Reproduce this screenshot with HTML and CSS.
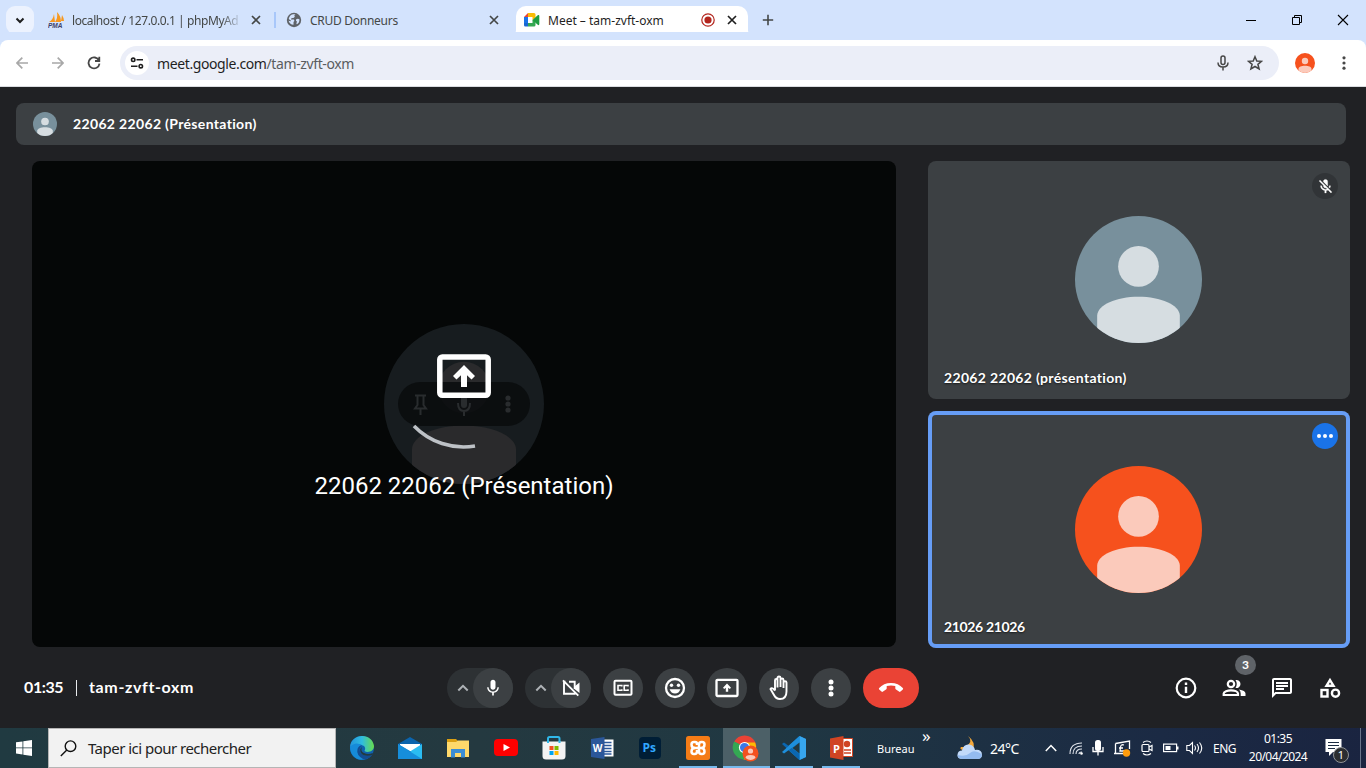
FILE: index.html
```html
<!DOCTYPE html>
<html lang="fr">
<head>
<meta charset="utf-8">
<title>Meet – tam-zvft-oxm</title>
<link rel="stylesheet" href="styles.css">
</head>
<body>
<svg class="defs" width="0" height="0">
  <clipPath id="round"><circle cx="63" cy="63" r="63"/></clipPath>
  <symbol id="avatar" viewBox="0 0 126 126">
    <g clip-path="url(#round)">
      <rect class="av-bg" width="126" height="126"/>
      <circle class="av-fg" cx="63" cy="50" r="20.2"/>
      <path class="av-fg" d="M22 127V99C22 88 41 80 63 80S104 88 104 99V127Z"/>
    </g>
  </symbol>
  <symbol id="x" viewBox="0 0 10 10"><path d="M1 1l8 8M9 1L1 9" fill="none" stroke="currentColor" stroke-width="1.7"/></symbol>
  <symbol id="mic" viewBox="0 0 24 24"><path fill="currentColor" d="M12 14c1.66 0 2.99-1.34 2.99-3L15 5c0-1.66-1.34-3-3-3S9 3.34 9 5v6c0 1.66 1.34 3 3 3zm5.3-3c0 3-2.54 5.1-5.3 5.1S6.7 14 6.7 11H5c0 3.41 2.72 6.23 6 6.72V21h2v-3.28c3.28-.48 6-3.3 6-6.72h-1.7z"/></symbol>
  <symbol id="up" viewBox="0 0 12 8"><path d="M1.3 6.5L6 1.8l4.700 4.700" fill="none" stroke="currentColor" stroke-width="2"/></symbol>
</svg>

<header class="tabs">
  <button class="tab-menu"><svg width="10" height="7" viewBox="0 0 10 7"><path d="M1.500 1.500L5 5l3.500-3.500" fill="none" stroke="#1f1f1f" stroke-width="2"/></svg></button>
  <div class="tab tab-pma">
    <svg class="fav" width="17" height="16" viewBox="0 0 17 16"><path d="M1 10Q5 8 6 2L7 10ZM7 10Q10 6 9 0Q13 4 13 10ZM13 9L14 3Q16 6 16 9Z" fill="#f7981f"/><text x="0" y="15.500" class="pma">PMA</text></svg>
    <span class="tab-title fade">localhost / 127.0.0.1 | phpMyAd</span>
    <svg class="close" width="10" height="10"><use href="#x"/></svg>
  </div>
  <i class="tab-sep"></i>
  <div class="tab tab-crud">
    <svg class="fav" width="16" height="16" viewBox="0 0 16 16"><circle cx="8" cy="8" r="7.200" fill="#5f6368"/><path d="M9.500 2.300Q7.500 3 8.800 4.500Q8 6.300 6.500 6Q4.500 6 5 7.500H8Q9 9 7.500 10V12.800Q3.500 12.500 2.500 8.500Q4.500 10 5 8.800L2.700 7Q3.500 3 7 2.300ZM10 7.500Q12 6 13.500 7.500Q13.500 11 10.800 12.300Q10 11.500 10.700 10.500Q11.500 9.500 10 8.800Z" fill="#d3e3fd"/></svg>
    <span class="tab-title">CRUD Donneurs</span>
    <svg class="close" width="10" height="10"><use href="#x"/></svg>
  </div>
  <div class="tab tab-active">
    <svg class="fav" width="16" height="14" viewBox="0 0 16 14"><path d="M0 4L4 0V4Z" fill="#ea4335"/><path d="M4 0H10Q11.500 0 11.500 1.500V5L8.500 7V4H4Z" fill="#fbbc04"/><path d="M0 4H4V10H0Z" fill="#1a73e8"/><path d="M0 10H4V13.500H1.300Q0 13.500 0 12Z" fill="#1967d2"/><path d="M4 10H8.500V7H11.500V12Q11.500 13.500 10 13.500H4Z" fill="#34a853"/><path d="M8.500 7L14 2Q15.300 1.500 15.300 3V11Q15.300 12.500 14 12Z" fill="#1e9e42"/></svg>
    <span class="tab-title">Meet – tam-zvft-oxm</span>
    <svg class="rec" width="14" height="14" viewBox="0 0 14 14"><circle cx="7" cy="7" r="6.200" fill="none" stroke="#b3261e" stroke-width="1.200"/><circle cx="7" cy="7" r="3.600" fill="#b3261e"/></svg>
    <svg class="close" width="10" height="10"><use href="#x"/></svg>
  </div>
  <svg class="plus" width="12" height="12" viewBox="0 0 12 12"><path d="M6 .8V11.200M.8 6H11.200" stroke="#444746" stroke-width="1.600"/></svg>
  <div class="win">
    <svg width="12" height="12" viewBox="0 0 12 12"><path d="M1 6.500H11" stroke="#000"/></svg>
    <svg width="12" height="12" viewBox="0 0 12 12"><path d="M1.500 3.500H8.500V10.500H1.500ZM3.500 3.500V1.500H10.500V8.500H8.500" fill="none" stroke="#000"/></svg>
    <svg width="12" height="12" viewBox="0 0 12 12"><path d="M1 1L11 11M11 1L1 11" stroke="#000" stroke-width="1.100"/></svg>
  </div>
</header>

<nav class="toolbar">
  <svg class="nav-i dim" width="12" height="12" viewBox="0 0 12 12"><path d="M12 6H1M6.300 .7L1 6L6.300 11.300"/></svg>
  <svg class="nav-i dim" width="12" height="12" viewBox="0 0 12 12"><path d="M0 6H11M5.700 .7L11 6L5.700 11.300"/></svg>
  <svg class="nav-i" width="14" height="14" viewBox="0 0 14 14"><path d="M12 4.500A5.500 5.500 0 1 0 12.500 7.700M12.300 .8V5H8"/></svg>
  <div class="omnibox">
    <span class="site"><svg width="14" height="12" viewBox="0 0 14 12"><g fill="none" stroke="#1f1f1f" stroke-width="1.600"><circle cx="3.200" cy="2.800" r="1.700"/><circle cx="10.800" cy="9.200" r="1.700"/><path d="M6.500 2.800H13M1 9.200H7.500"/></g></svg></span>
    <span class="url">meet.google.com<span>/tam-zvft-oxm</span></span>
    <svg class="o-mic" width="12" height="16" viewBox="0 0 12 16"><g fill="none" stroke="#474747" stroke-width="1.500"><rect x="4" y="1" width="4" height="8.500" rx="2"/><path d="M1 7.500Q1 12 6 12T11 7.500M6 12V15.500"/></g></svg>
    <svg width="16" height="16" viewBox="0 0 16 16"><path d="M8 1.700L9.800 6L14.500 6.300L10.900 9.300L12.100 14L8 11.500L3.900 14L5.100 9.300L1.500 6.300L6.200 6Z" fill="none" stroke="#474747" stroke-width="1.500"/></svg>
  </div>
  <svg class="me orange" width="20" height="20"><use href="#avatar"/></svg>
  <svg class="kebab" width="4" height="14" viewBox="0 0 4 14" fill="#474747"><circle cx="2" cy="1.800" r="1.600"/><circle cx="2" cy="7" r="1.600"/><circle cx="2" cy="12.200" r="1.600"/></svg>
</nav>

<main class="meet">
  <div class="banner"><svg class="slate" width="24" height="24"><use href="#avatar"/></svg><span>22062 22062 (Présentation)</span></div>
  <div class="content">
    <section class="stage">
      <svg class="ghost" width="160" height="160" viewBox="0 0 160 160">
        <use href="#avatar" width="160" height="160"/>
        <rect x="14" y="58" width="132" height="44" rx="22" fill="#080b0c" fill-opacity=".82"/>
        <g fill="none" stroke="#292c2e" stroke-width="2"><path d="M31 71.500H42M33.500 72V81L31 84.500H42L39.500 81V72M36.500 85V91"/><path d="M74 79Q74 87 80 87T86 79M80 87V92"/></g>
        <rect x="77" y="70" width="6" height="14" rx="3" fill="#292c2e"/>
        <g fill="#292c2e"><circle cx="124" cy="74" r="2.600"/><circle cx="124" cy="80" r="2.600"/><circle cx="124" cy="86" r="2.600"/></g>
        <rect x="55.800" y="33" width="48.400" height="38.200" rx="2.500" fill="none" stroke="#fff" stroke-width="5.500"/>
        <path d="M80 41L91 52L87.500 55.500L83 51.300V63H77V51.300L72.500 55.500L69 52Z" fill="#fff"/>
        <path d="M30 102A69 69 0 0 0 91 122" fill="none" stroke="#bdc1c6" stroke-width="3.500"/>
      </svg>
      <p class="stage-name">22062 22062 (Présentation)</p>
    </section>
    <aside class="tiles">
      <article class="tile first">
        <svg class="slate" width="127" height="127"><use href="#avatar"/></svg>
        <span class="badge"><svg width="17" height="17" viewBox="0 0 24 24"><path fill="#fff" stroke="#fff" stroke-width=".5" d="M19 11h-1.700c0 .74-.16 1.430-.43 2.050l1.230 1.230c.56-.98.9-2.090.9-3.280zm-4.020.17c0-.06.02-.11.02-.17V5c0-1.660-1.340-3-3-3S9 3.340 9 5v.18l5.980 5.990zM4.270 3L3 4.270l6.010 6.010V11c0 1.660 1.330 3 2.990 3 .22 0 .44-.03.65-.08l1.660 1.660c-.71.33-1.500.52-2.310.52-2.760 0-5.300-2.100-5.300-5.100H5c0 3.410 2.720 6.230 6 6.720V21h2v-3.280c.91-.13 1.770-.45 2.540-.9L19.730 21 21 19.730 4.270 3z"/></svg></span>
        <span class="name">22062 22062 (présentation)</span>
      </article>
      <article class="tile speaking">
        <svg class="orange" width="127" height="127"><use href="#avatar"/></svg>
        <span class="badge blue"><svg width="16" height="4" viewBox="0 0 16 4" fill="#fff"><circle cx="2" cy="2" r="2"/><circle cx="8" cy="2" r="2"/><circle cx="14" cy="2" r="2"/></svg></span>
        <span class="name digits">21026 21026</span>
      </article>
    </aside>
  </div>
  <footer class="controls">
    <div class="info"><span class="time">01:35</span><i></i><span class="code">tam-zvft-oxm</span></div>
    <div class="buttons">
      <div class="pair"><svg class="up" width="12" height="8"><use href="#up"/></svg><button class="btn"><svg width="20" height="20"><use href="#mic"/></svg></button></div>
      <div class="pair"><svg class="up" width="12" height="8"><use href="#up"/></svg><button class="btn"><svg width="20" height="20" viewBox="0 0 20 20"><path d="M4.500 3.800H3V15.800H14.500M8 3.800H13.700V11M2 2.300L17.300 17.600" fill="none" stroke="#fff" stroke-width="1.900"/><path d="M13.500 8.500L18.500 4.500V15L13.500 11Z" fill="#fff"/></svg></button></div>
      <button class="btn"><svg width="20" height="18" viewBox="0 0 20 18"><rect x="1.500" y="1.800" width="17" height="14" rx="1" fill="none" stroke="#fff" stroke-width="2"/><path d="M8.800 7.500V6.500H5V11.200H8.800V10.200M15 7.500V6.500H11.200V11.200H15V10.200" fill="none" stroke="#fff" stroke-width="1.600"/></svg></button>
      <button class="btn"><svg width="22" height="22" viewBox="0 0 22 22"><circle cx="11" cy="11" r="9" fill="none" stroke="#fff" stroke-width="2.300"/><circle cx="7.500" cy="8.300" r="1.700" fill="#fff"/><circle cx="14.500" cy="8.300" r="1.700" fill="#fff"/><path d="M5.600 12.300H16.400Q15 16.500 11 16.500T5.600 12.300" fill="#fff"/></svg></button>
      <button class="btn"><svg width="24" height="20" viewBox="0 0 24 20"><rect x="1.500" y="1.800" width="21" height="16.200" rx="1" fill="none" stroke="#fff" stroke-width="2.300"/><path d="M12 5.500L16 9.700L14.800 11L13.200 9.700V13.700H10.800V9.700L9.200 11L8 9.700Z" fill="#fff"/></svg></button>
      <button class="btn"><svg width="20" height="26" viewBox="0 0 20 26"><path d="M6 15.500V5.500Q6 4 7.200 4T8.500 5.500V12.500M8.500 12V3Q8.500 1.500 10 1.500T11.500 3V12M11.500 5Q11.500 3.500 13 3.500T14.500 5V13M14.500 7.500Q14.500 6.200 16 6.200T17.500 7.500V16.500Q17.500 24 11 24Q7 24 5 20L1.500 14Q2.500 12.500 4.200 13.700L6 15.500" fill="none" stroke="#fff" stroke-width="1.900"/></svg></button>
      <button class="btn"><svg width="6" height="18" viewBox="0 0 6 18" fill="#fff"><circle cx="3" cy="3" r="2.500"/><circle cx="3" cy="9" r="2.500"/><circle cx="3" cy="15" r="2.500"/></svg></button>
      <button class="btn end"><svg width="26" height="24" viewBox="0 0 26 24"><path fill="#fff" d="M13 7C8 7 4 9 1.200 11.900Q.5 12.600 1.200 13.400L3.500 15.500Q4.200 16.200 5 15.600L8 13.500Q8.700 13 8.700 12.200V10Q13 8.800 17.300 10V12.200Q17.300 13 18 13.500L21 15.600Q21.800 16.200 22.500 15.500L24.800 13.400Q25.500 12.600 24.800 11.900C22 9 18 7 13 7Z"/></svg></button>
    </div>
    <div class="panels">
      <span><svg width="22" height="22" viewBox="0 0 22 22"><circle cx="11" cy="11" r="9.300" fill="none" stroke="#fff" stroke-width="2.200"/><path d="M11 5.500V8M11 9.700V16" stroke="#fff" stroke-width="2.400"/></svg></span>
      <span class="people"><svg width="24" height="18" viewBox="0 0 24 18"><g fill="none" stroke="#fff" stroke-width="2.200"><circle cx="9" cy="5" r="3.200"/><path d="M1.700 16V14.500C1.700 12.500 5.500 11.300 9 11.300S16 12.500 16 14.500V16Z"/></g><path d="M13.500 1A4.100 4.100 0 1 1 13.500 9Q16 5 13.500 1ZM17 10.500Q23.500 11.500 23.500 14.500V17H18.700V14.500Q18.700 12 17 10.500Z" fill="#fff"/></svg><b>3</b></span>
      <span><svg width="24" height="24" viewBox="0 0 24 24"><path fill="#fff" d="M4 4h16v12H5.170L4 17.170V4m0-2c-1.100 0-1.990.9-1.990 2L2 22l4-4h14c1.100 0 2-.9 2-2V4c0-1.100-.9-2-2-2H4zm2 10h8v2H6v-2zm0-3h12v2H6V9zm0-3h12v2H6V6z"/></svg></span>
      <span><svg width="22" height="22" viewBox="0 0 22 22"><g fill="none" stroke="#fff" stroke-width="2.400"><path d="M11 3L14.500 8.800H7.500Z"/><rect x="2.500" y="13" width="6" height="6.500"/><circle cx="16.500" cy="16.200" r="3.600"/></g></svg></span>
    </div>
  </footer>
</main>

<footer class="taskbar">
  <div class="start"><svg width="16" height="16" viewBox="0 0 16 16"><path fill="#fff" d="M0 2.300L6.500 1.400V7.500H0ZM7.300 1.300L16 0V7.500H7.300ZM0 8.300H6.500V14.500L0 13.600ZM7.300 8.300H16V16L7.300 14.700Z"/></svg></div>
  <div class="search"><svg width="17" height="17" viewBox="0 0 17 17"><g fill="none" stroke="#111" stroke-width="1.400"><circle cx="10.500" cy="6.200" r="5.300"/><path d="M6.800 10L.8 16"/></g></svg><span>Taper ici pour rechercher</span></div>
  <div class="apps">
    <span><svg width="24" height="24" viewBox="0 0 24 24"><defs><linearGradient id="eg"><stop stop-color="#2394db"/><stop offset=".5" stop-color="#2fbce0"/><stop offset="1" stop-color="#68dc4b"/></linearGradient></defs><circle cx="12" cy="12" r="12" fill="#0f61ad"/><path d="M0 11C1-3 22-4 24 10C24 16 17 17 14.500 15Q16 12 14 10Q7 6 0 11Z" fill="url(#eg)"/><path d="M0 11Q5 5 12 9Q7 11 9 17Q12 23 18 22C8 27 0 20 0 11Z" fill="#168bd9"/><path d="M12 9.500Q7.500 13 11 17.500Q16 22 23 17Q20 24 13 23Q6 19 7.500 13Q9 9 12 9.500Z" fill="#134d92"/><path d="M12 11Q10 15 14 17Q18 19 23 17L22 19Q14 21 11 17Q9 13 12 11Z" fill="#233940"/></svg></span>
    <span><svg width="24" height="22" viewBox="0 0 24 22"><path d="M0 7L12 0L24 7V14H0Z" fill="#0b64ad"/><path d="M2 7H22V14H2Z" fill="#fff"/><path d="M0 7L12 14L0 22Z" fill="#1389d5"/><path d="M24 7L0 22H24Z" fill="#2bbcf1"/><path d="M0 7L24 22H0Z" fill="#168edb"/></svg></span>
    <span><svg width="22" height="19" viewBox="0 0 22 19"><path d="M0 0H9L11 2H22V8H0Z" fill="#dca013"/><path d="M0 3H9L11 1.500H22V18H0Z" fill="#ffd96b"/><path d="M4 10H18V18.500H14V14H8V18.500H4Z" fill="#3b8dd5"/></svg></span>
    <span><svg width="24" height="18" viewBox="0 0 24 18"><rect width="24" height="17" rx="4" fill="#f00"/><path d="M9.500 5L16 8.500L9.500 12Z" fill="#fff"/></svg></span>
    <span><svg width="24" height="24" viewBox="0 0 24 24"><path d="M6 7V2.500Q6 1 7.500 1H16Q17.500 1 17.500 2.500V7" fill="none" stroke="#30b7e8" stroke-width="2"/><path d="M.5 5.500H23.500V20Q23.500 23.500 20 23.500H4Q.5 23.500 .5 20Z" fill="#f3f3f3"/><path d="M6 5V7M17.500 5V7" stroke="#30b7e8" stroke-width="2"/><path d="M7.500 10H11.500V14H7.500Z" fill="#f25022"/><path d="M12.500 10H16.500V14H12.500Z" fill="#7fba00"/><path d="M7.500 15H11.500V19H7.500Z" fill="#00a4ef"/><path d="M12.500 15H16.500V19H12.500Z" fill="#ffb900"/></svg></span>
    <span><svg width="23" height="22" viewBox="0 0 23 22"><path d="M12 2.500H22.500V19.500H12Z" fill="#fff"/><path d="M13 5.500H20.500M13 8.500H20.500M13 11.500H20.500M13 14.500H20.500M13 17H20.500" stroke="#2b579a" stroke-width="1.300"/><path d="M0 2L13.500 0V22L0 20Z" fill="#2b579a"/><text x="1.800" y="15" class="lg w">W</text></svg></span>
    <span><svg width="22" height="22" viewBox="0 0 22 22"><rect width="22" height="22" rx="4" fill="#001e36"/><text x="3.500" y="14.500" class="lg ps">Ps</text></svg></span>
    <span class="open"><svg width="24" height="24" viewBox="0 0 24 24"><rect width="24" height="24" rx="2.500" fill="#f57c16"/><g fill="none" stroke="#fff" stroke-width="2.500"><path d="M11 9V8Q11 6 9 6H8Q5.500 6 5.500 8.500Q5.500 12 9 12H15Q18.500 12 18.500 8.500Q18.500 6 16 6H15.500Q13 6 13 8.500V15.500Q13 18 15.500 18H16Q18.500 18 18.500 15.500Q18.500 12 15 12"/><path d="M9 12Q5.500 12 5.500 15.500Q5.500 18 8 18H8.500Q11 18 11 15.500V14"/></g></svg></span>
    <span class="open current"><svg width="28" height="27" viewBox="0 0 28 27"><path d="M12.500 12.500L2.200 6.500A12 12 0 0 1 23 6.500Z" fill="#ea4335"/><path d="M12.500 12.500H24.400A12 12 0 0 0 23 6.500H12.500Z" fill="#ea4335"/><path d="M2.200 6.500A12 12 0 0 0 11.500 24.400L17 14Z" fill="#34a853"/><path d="M23 7.500H12.500L17.500 15L11.500 24.400A12 12 0 0 0 23 7.500Z" fill="#fbbc04"/><circle cx="12.500" cy="12.500" r="5.600" fill="#fff"/><circle cx="12.500" cy="12.500" r="4.500" fill="#3c78e8"/><circle cx="18.500" cy="18.500" r="8" fill="#f4511e"/><circle cx="18.500" cy="16" r="2.600" fill="#fbcabb"/><path d="M13.500 23Q13.500 20 18.500 20T23.500 23Q18.500 27 13.500 23Z" fill="#fbcabb"/></svg></span>
    <span class="open"><svg width="24" height="24" viewBox="0 0 24 24"><path d="M17.500 0L24 3V21L17.500 24L4 12Z" fill="#1385d0"/><path d="M17.500 0L24 3V21L17.500 24Z" fill="#37a6ee"/><path d="M0 8L2 6.500L17.500 17.800V24L0 8Z" fill="#0b67b1"/><path d="M0 16L2 17.500L17.500 6.200V0L0 16Z" fill="#1e8fdb"/><path d="M17.500 6.500V17.500L10.500 12Z" fill="#233940"/></svg></span>
    <span class="open ppt"><svg width="23" height="24" viewBox="0 0 23 24"><path d="M12 2.500H22.500V20.500H12Z" fill="#fff" stroke="#d04423"/><circle cx="17" cy="8" r="3.200" fill="#d04423"/><path d="M14 14H21M14 17H21" stroke="#d04423" stroke-width="1.500"/><path d="M0 2.500L13.500 0V24L0 21.500Z" fill="#d04423"/><text x="3" y="16.500" class="lg">P</text></svg></span>
  </div>
  <span class="bureau">Bureau</span><span class="chev">»</span>
  <svg class="weather" width="26" height="26" viewBox="0 0 26 26"><path d="M11 1Q17 7 8 12L4 12Q2 14 6 15H16Q19 7 11 1Z" fill="#f5a93b"/><path d="M5.500 24Q0 24 .5 19.500Q1 15.500 5 15.500Q6.500 9 12 9.500Q17 10 18 15Q24.500 14 25 19.500Q25 24 20 24Z" fill="#c3dafa"/><path d="M5.500 24Q1 24 .5 20Q9 22 13 18T25 19.500Q25 24 20 24Z" fill="#94bbf0"/></svg>
  <span class="temp">24°C</span>
  <div class="tray">
    <svg class="t-up" width="12" height="8" viewBox="0 0 12 8"><path d="M.8 7L6 1.500L11.200 7" fill="none" stroke="#fff" stroke-width="1.500"/></svg>
    <svg class="t-wifi" width="14" height="14" viewBox="0 0 14 14"><g fill="none" stroke="#e2e6ed" stroke-width="1.100"><path d="M1 13Q1 2 13 2M4 13Q4 5 13 5M7 13Q7 8 13 8M10 13Q10 11 13 11"/></g><circle cx="12.500" cy="12.500" r="1.300" fill="#fff"/></svg>
    <svg class="t-mic" width="12" height="16" viewBox="0 0 12 16"><rect x="3" width="6" height="11" rx="2.500" fill="#fff"/><path d="M1 7V11.500H11V7M6 12V15.500" fill="none" stroke="#fff" stroke-width="1.300"/></svg>
    <svg class="t-tool" width="17" height="17" viewBox="0 0 17 17"><path d="M1.500 3.500L15.500 1V9M1.500 3.500V13.500H9M1.500 13.500H0" fill="none" stroke="#fff" stroke-width="1.300"/><path d="M10 5Q7 4 6.500 7L6 11H10M5 8H9" fill="none" stroke="#fff" stroke-width="1.300"/><circle cx="12.500" cy="13" r="3.700" fill="#ff9c0c"/></svg>
    <svg class="t-cam" width="12" height="16" viewBox="0 0 12 16"><g fill="none" stroke="#fff" stroke-width="1.200"><rect x="1" y="4.500" width="7" height="7" rx="1"/><path d="M8 7L11 5.500V10.500L8 9M2 2.500Q6-.5 10 2.500M2 13.500Q6 16.500 10 13.500"/></g></svg>
    <svg class="t-bat" width="16" height="10" viewBox="0 0 16 10"><rect x=".6" y="1.100" width="13" height="7.500" fill="none" stroke="#fff" stroke-width="1.200"/><rect x="2.500" y="3" width="5" height="4" fill="#fff"/><rect x="14" y="3.500" width="1.500" height="3" fill="#fff"/></svg>
    <svg class="t-vol" width="17" height="14" viewBox="0 0 17 14"><path d="M.8 4.500H3.500L6.500 1.500V12.500L3.500 9.500H.8ZM8.500 4.500Q10.500 7 8.500 9.500M11 3Q14 7 11 11M13.500 1.500Q18 7 13.500 12.500" fill="none" stroke="#fff" stroke-width="1.100"/></svg>
  </div>
  <span class="lang">ENG</span>
  <div class="clock"><span>01:35</span><span>20/04/2024</span></div>
  <div class="notif"><svg width="17" height="18" viewBox="0 0 17 18"><path d="M.5 0H16.500V13H8L4 17V13H.5Z" fill="#fff"/><path d="M3 3.500H14M3 6.500H14M3 9.500H10" stroke="#1b2b42"/></svg><b>1</b></div>
</footer>
</body>
</html>
```
FILE: styles.css
```css
* { box-sizing: border-box; }
body { margin: 0; width: 1366px; height: 768px; overflow: hidden; display: flex; flex-direction: column; font-family: "Noto Sans", sans-serif; background: #202124; }
button { border: 0; padding: 0; color: inherit; }
svg { display: block; flex: none; }
.defs { position: absolute; }
.slate { --bg: #78909c; --fg: #d6dde1; }
.orange { --bg: #f6511d; --fg: #fbcabb; }
.ghost { --bg: #171c1f; --fg: #2a2a2c; }
.av-bg { fill: var(--bg); }
.av-fg { fill: var(--fg); }

/* Tab strip */
.tabs { height: 40px; background: #d3e3fd; display: flex; align-items: center; color: #444746; font-size: 12px; }
.tab-menu { width: 28px; height: 28px; margin-left: 6px; border-radius: 9px; background: #ecf2fe; display: grid; place-items: center; }
.tab { display: flex; align-items: center; height: 34px; }
.tab-title { white-space: nowrap; line-height: 20px; padding-top: 1px; }
.tab-pma { width: 226px; margin-left: 14px; }
.tab-pma .tab-title { width: 170px; margin-left: 7px; letter-spacing: -.42px; }
.fade { -webkit-mask-image: linear-gradient(90deg, #000 88%, transparent); mask-image: linear-gradient(90deg, #000 88%, transparent); }
.pma { font: italic bold 6.500px "Liberation Sans", sans-serif; fill: #3d3f68; }
.tab-pma .close { margin-left: 9px; }
.tab-sep { width: 2px; height: 16px; background: #a8c7fa; }
.tab-crud { width: 240px; padding-left: 10px; padding-right: 17px; }
.tab-crud .tab-title { margin-left: 8px; flex: 1; letter-spacing: -.27px; }
.tab-active { position: relative; width: 232px; margin-top: 6px; padding: 0 11px 6px 8px; border-radius: 10px 10px 0 0; background: #fff; color: #1f1f1f; }
.tab-active::before, .tab-active::after { content: ""; position: absolute; bottom: 0; width: 10px; height: 10px; }
.tab-active::before { left: -10px; background: radial-gradient(circle at 0 0, transparent 9.500px, #fff 10px); }
.tab-active::after { right: -10px; background: radial-gradient(circle at 100% 0, transparent 9.500px, #fff 10px); }
.tab-active .tab-title { margin-left: 8px; flex: 1; }
.tab-active .rec { margin-right: 0; }
.tab-active .close { margin-left: 12px; }
.plus { margin-left: 14px; }
.win { margin-left: auto; margin-right: 17px; display: flex; gap: 34px; }

/* Address bar */
.toolbar { height: 47px; background: #fff; border-bottom: 1px solid #dadce0; border-radius: 8px 8px 0 0; box-shadow: 0 -8px 0 #d3e3fd; clip-path: inset(-8px 0 0 0); display: flex; align-items: center; padding-left: 16px; }
.nav-i { fill: none; stroke: #474747; stroke-width: 1.800; margin-right: 24px; }
.nav-i.dim { stroke: #a8a8a8; stroke-width: 1.700; }
.nav-i:nth-child(3) { margin: 0 19px 0 -1px; }
.omnibox { width: 1159px; height: 34px; border-radius: 17px; background: #ebeef8; display: flex; align-items: center; padding: 0 16px 0 5px; }
.site { width: 24px; height: 24px; border-radius: 50%; background: #fff; display: grid; place-items: center; }
.url { flex: 1; margin-left: 8px; font-size: 14px; letter-spacing: -.39px; color: #1f1f1f; }
.url span { color: #5a5d60; }
.o-mic { margin-right: 18px; }
.me { margin-left: 16px; }
.kebab { margin-left: 27px; }

/* Meeting */
.meet { height: 641px; background: #202124; color: #fff; font-family: Lato, sans-serif; font-variant-ligatures: none; display: flex; flex-direction: column; }
.banner { height: 42px; margin: 16px 20px 0 16px; padding-left: 17px; border-radius: 8px; background: #3c4043; display: flex; align-items: center; gap: 16px; font-size: 14px; font-weight: 700; }
.banner span { letter-spacing: .34px; padding-bottom: 2px; }
.content { height: 487px; margin: 16px 16px 0 32px; display: flex; gap: 32px; }
.stage { position: relative; width: 864px; height: 486px; border-radius: 8px; background: #050707; display: grid; place-items: center; }
.stage-name { position: absolute; top: 309px; left: 0; width: 100%; margin: 0; text-align: center; font: 24px/32px Roboto, sans-serif; }
.tiles { width: 422px; display: flex; flex-direction: column; gap: 12px; }
.tile { position: relative; height: 238px; border-radius: 8px; background: #3c4043; display: grid; place-items: center; padding-right: 1px; }
.first { padding-bottom: 1px; }
.speaking { height: 237px; box-shadow: inset 0 0 0 4px #669df6; }
.badge { position: absolute; top: 12px; right: 12px; width: 26px; height: 26px; border-radius: 50%; background: #313437; display: grid; place-items: center; }
.blue { background: #1a73e8; }
.name { position: absolute; left: 16px; bottom: 11px; font-size: 14px; line-height: 20px; font-weight: 700; letter-spacing: .33px; text-shadow: 0 1px 2px rgba(0,0,0,.6); }
.digits { letter-spacing: -.34px; }

.controls { height: 80px; display: grid; grid-template-columns: 447px 472px 1fr; align-items: center; }
.info { display: flex; align-items: center; padding-left: 24px; font-size: 16px; font-weight: 700; }
.info span { padding-bottom: 3px; }
.time { width: 40px; letter-spacing: -.4px; }
.code { letter-spacing: .64px; }
.info i { width: 1px; height: 16px; background: #e8eaed; margin: 0 12px; }
.buttons { display: flex; gap: 12px; }
.btn { width: 40px; height: 40px; border-radius: 20px; background: #3c4043; display: grid; place-items: center; }
.pair { width: 66px; height: 40px; border-radius: 20px; background: #2d3134; display: flex; align-items: center; justify-content: space-between; padding-left: 10px; }
.up { color: #aeb2b6; }
.end { width: 56px; background: #ea4335; }
.panels { display: flex; justify-content: flex-end; padding-right: 12px; }
.panels span { position: relative; width: 48px; height: 48px; display: grid; place-items: center; }
.people b { position: absolute; left: 25px; top: -9px; width: 21px; height: 20px; border-radius: 10px; background: #5f6368; font-size: 12px; line-height: 20px; text-align: center; }

/* Taskbar */
.taskbar { height: 40px; background: linear-gradient(90deg, #203a41, #243940 35%, #203842 55%, #1b2a44 85%, #1a2440); color: #fff; font-size: 12px; display: flex; align-items: center; }
.start { width: 48px; display: grid; place-items: center; }
.search { width: 288px; height: 40px; background: #f2f2f2; border: 1px solid #b5b5b5; color: #222; font-size: 15px; display: flex; align-items: center; padding-left: 11px; gap: 11px; white-space: nowrap; }
.search span { letter-spacing: -.52px; }
.apps { display: flex; margin-left: 2px; }
.apps span { width: 48px; height: 40px; display: grid; place-items: center; }
.open { background: linear-gradient(#76b9ed, #76b9ed) center bottom / 38px 2px no-repeat; }
.open.current { background: linear-gradient(#76b9ed, #76b9ed) center bottom / 47px 2px no-repeat, linear-gradient(#4c6067, #4c6067) center / 47px 40px no-repeat; }
.apps .ppt { width: 46px; }
.lg { font: bold 11px "Open Sans", sans-serif; fill: #fff; }
.w { font-size: 10px; }
.ps { font-size: 12px; fill: #31a8ff; }
.bureau { width: 45px; margin-left: 13px; font-size: 11px; }
.chev { width: 12px; font-size: 17px; line-height: 20px; margin-top: -25px; }
.weather { margin-left: 23px; }
.temp { width: 46px; margin-left: 7px; font-size: 14px; letter-spacing: -.5px; }
.tray { width: 176px; display: flex; align-items: center; }
.t-up { margin-left: 9px; }
.t-wifi { margin-left: 12px; }
.t-mic { margin-left: 9px; }
.t-tool { margin-left: 10px; }
.t-cam { margin-left: 10px; }
.t-bat { margin-left: 10px; }
.t-vol { margin-left: 7px; }
.lang { width: 35px; margin-left: 1px; letter-spacing: -.5px; }
.clock { width: 60px; display: flex; flex-direction: column; align-items: center; line-height: 18px; white-space: nowrap; letter-spacing: -.55px; }
.notif { position: relative; margin-left: 17px; width: 36px; height: 40px; padding-top: 11px; border-right: 1px solid #69748a; }
.notif b { position: absolute; left: 8px; top: 19px; width: 16px; height: 16px; border: 1px solid #909396; border-radius: 50%; background: #2b2d30; font-size: 11px; line-height: 14px; font-weight: 400; text-align: center; }
```
